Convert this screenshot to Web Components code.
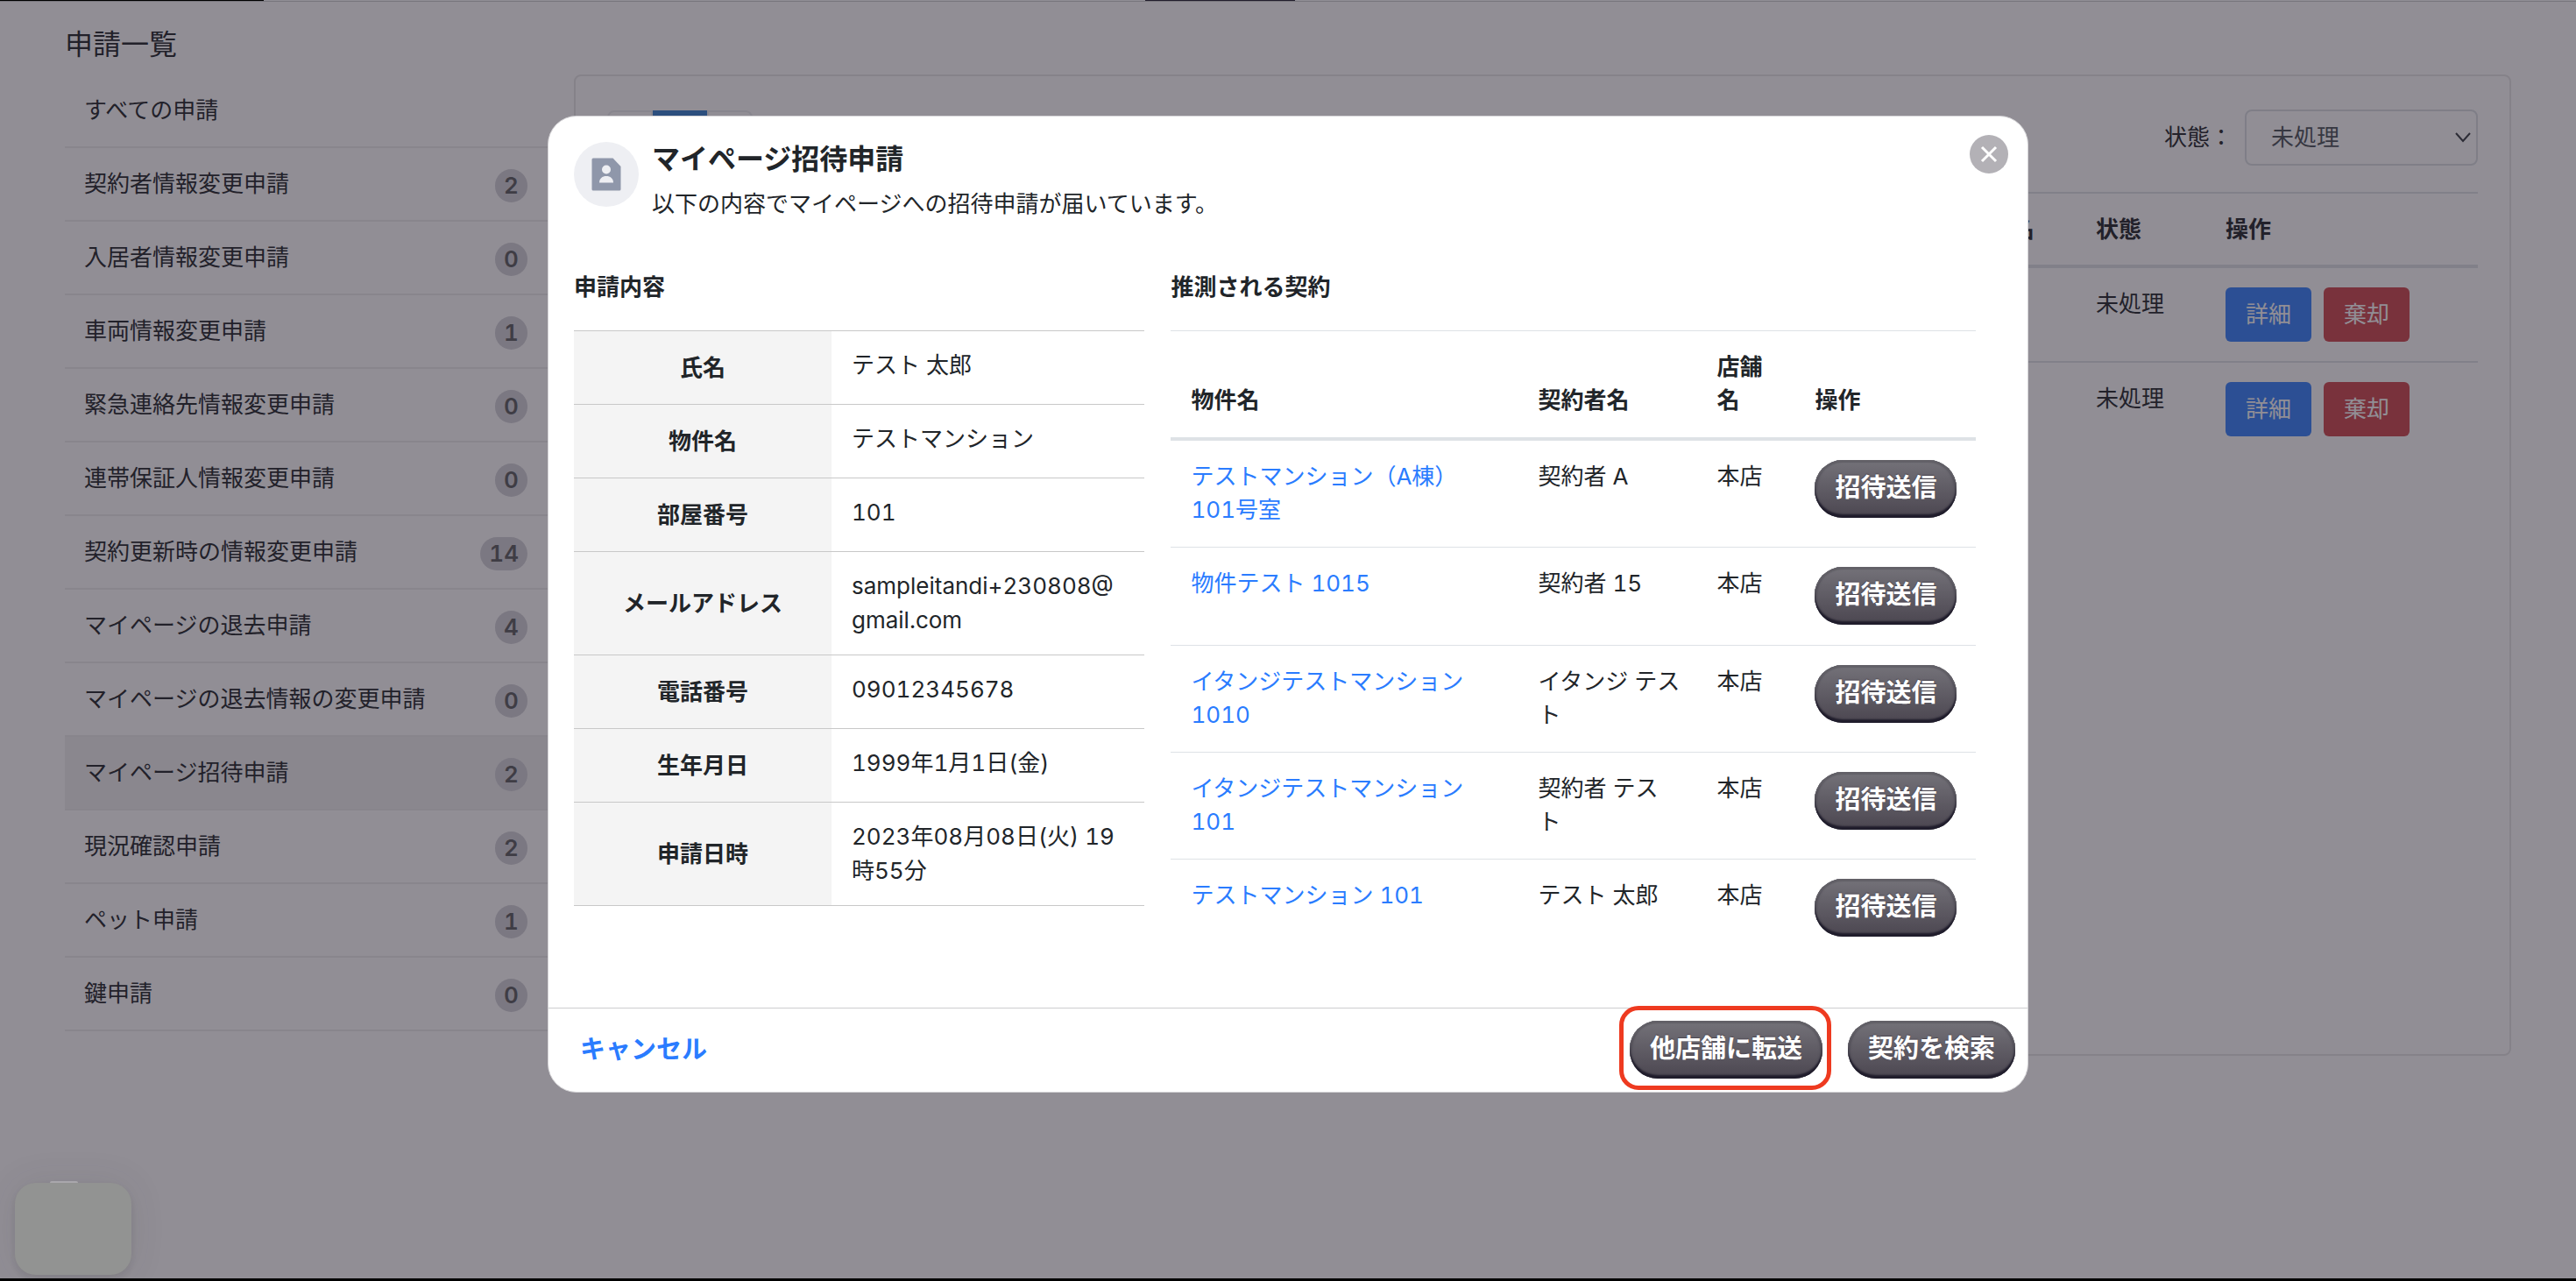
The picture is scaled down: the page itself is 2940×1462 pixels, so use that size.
<!DOCTYPE html>
<html lang="ja">
<head>
<meta charset="utf-8">
<title>申請一覧</title>
<style>
  body {
    margin: 0;
    min-height: 100vh;
    overflow: hidden;
    background: #fff;
    color: #212529;
    font: 26px/38px Inter, "Noto Sans CJK JP", sans-serif;
    font-variant-numeric: tabular-nums;
    --link: #2a7cff;
    --line: #dee2e6;
  }
</style>
</head>
<body>
<request-page></request-page>
<modal-overlay>
  <invite-modal heading="マイページ招待申請" note="以下の内容でマイページへの招待申請が届いています。">
    <detail-table slot="detail"></detail-table>
    <contract-table slot="contracts"></contract-table>
    <text-button slot="cancel">キャンセル</text-button>
    <pill-button slot="actions" highlight>他店舗に転送</pill-button>
    <pill-button slot="actions">契約を検索</pill-button>
  </invite-modal>
</modal-overlay>
<chat-launcher></chat-launcher>
<window-edge></window-edge>

<script>
/**
 * base for all elements below: clone "static markup" into an open shadow root.
 */
class BaseElement extends HTMLElement {
   constructor() {
      super();
      const template = document.createElement("template");
      template.innerHTML = this.constructor.markup;
      this.attachShadow({ mode: "open" });
      this.shadowRoot.appendChild(template.content.cloneNode(true));
   }
}


/**
 * pill-button
 *    dark glossy button, "highlight" adds the red frame around it.
 */
class PillButton extends BaseElement {
   static get markup() {
      return `
<style>
  :host { display: inline-block; position: relative; vertical-align: top; }
  button {
    display: block;
    height: 66px;
    padding: 0 23px 2px;
    border: 0;
    border-radius: 32px;
    background: linear-gradient(#747279, #4b4650);
    box-shadow: inset 0 3px 1px #626067, inset 0 -4px 2px #201d2c, inset 3px 0 2px #55525b, inset -3px 0 2px #55525b;
    color: #fff;
    font: bold 29px/44px Inter, "Noto Sans CJK JP", sans-serif;
    text-shadow: 0 -1px 1px #4b4650;
    white-space: nowrap;
  }
  :host([highlight])::after {
    content: "";
    position: absolute;
    inset: -17px -10px -13px -12px;
    border: 5px solid #ee3a20;
    border-radius: 22px;
    pointer-events: none;
  }
</style>
<button type="button"><slot></slot></button>`;
   }
}
customElements.define("pill-button", PillButton);


class TextButton extends BaseElement {
   static get markup() {
      return `
<style>
  :host { display: inline-block; }
  button {
    padding: 0;
    border: 0;
    background: none;
    color: var(--link);
    font: bold 29px/44px Inter, "Noto Sans CJK JP", sans-serif;
  }
</style>
<button type="button"><slot></slot></button>`;
   }
}
customElements.define("text-button", TextButton);


/**
 * side-item
 *    one row of the request list. attributes: count, active
 */
class SideItem extends BaseElement {
   static get markup() {
      return `
<style>
  :host { display: block; }
  a {
    display: flex;
    align-items: center;
    justify-content: space-between;
    box-sizing: border-box;
    height: 84px;
    padding: 0 24px 0 22px;
    border-bottom: 2px solid #ededed;
    color: inherit;
    text-decoration: none;
  }
  :host([active]) a { background: #f1f1f1; }
  b {
    box-sizing: border-box;
    min-width: 37px;
    margin-top: 4px;
    padding: 0 10px;
    border-radius: 19px;
    background: #d3d3d9;
    color: #5b5d5f;
    font-weight: 600;
    text-align: center;
  }
</style>
<a href="#"><slot></slot></a>`;
   }

   connectedCallback() {
      const count = this.getAttribute('count');
      if (count !== null) {
         const badge = document.createElement('b');
         badge.textContent = count;
         this.shadowRoot.querySelector('a').appendChild(badge);
      }
   }
}
customElements.define("side-item", SideItem);


/**
 * status-select
 */
class StatusSelect extends BaseElement {
   static get markup() {
      return `
<style>
  :host { display: flex; align-items: center; gap: 14px; }
  span { display: grid; width: 266px; }
  select, svg { grid-area: 1 / 1; }
  select {
    appearance: none;
    height: 64px;
    padding: 0 28px;
    border: 2px solid #dadfe2;
    border-radius: 8px;
    background: #fff;
    color: #495057;
    font: inherit;
  }
  svg { justify-self: end; align-self: center; margin-right: 7px; pointer-events: none; }
</style>
<label for="status">状態：</label>
<span>
  <select id="status"><option>未処理</option></select>
  <svg width="20" height="12" viewBox="0 0 20 12" fill="none" stroke="#343a40" stroke-width="2"><path d="M2 1l8 9 8-9"/></svg>
</span>`;
   }
}
customElements.define("status-select", StatusSelect);


/**
 * request-table
 *    the list behind the modal
 */
class RequestTable extends BaseElement {
   static get markup() {
      const row = `
  <tr>
    <td></td><td></td><td>未処理</td>
    <td><div><button type="button" class="detail">詳細</button><button type="button" class="reject">棄却</button></div></td>
  </tr>`;
      return `
<style>
  :host { display: block; }
  table { width: 100%; table-layout: fixed; border-collapse: collapse; }
  th, td { padding: 22px 23px; border-top: 2px solid var(--line); text-align: left; vertical-align: top; }
  th { padding-bottom: 21px; border-bottom: 4px solid var(--line); }
  .store { width: 102px; }
  .status { width: 102px; }
  .action { width: 265px; }
  div { display: flex; gap: 14px; }
  button {
    width: 98px;
    height: 62px;
    padding: 0;
    border: 0;
    border-radius: 6px;
    color: #fff;
    font: inherit;
  }
  .detail { background: #3581fd; }
  .reject { background: #cf474d; }
</style>
<table>
  <thead><tr><th></th><th class="store">店舗名</th><th class="status">状態</th><th class="action">操作</th></tr></thead>
  <tbody>${row}${row}</tbody>
</table>`;
   }
}
customElements.define("request-table", RequestTable);


/**
 * request-page
 *    title, side list and the card with the request table
 */
class RequestPage extends BaseElement {
   static get markup() {
      return `
<style>
  :host { display: block; padding: 27px 74px 0; }
  h1 { margin: 0 0 10px; font-size: 32px; line-height: 48px; font-weight: 400; }
  .columns { display: grid; grid-template-columns: 552px 1fr; gap: 29px; align-items: start; }
  main {
    box-sizing: border-box;
    min-height: calc(100vh - 342px);
    padding: 38px 36px;
    border: 2px solid #e6e6e6;
    border-radius: 8px;
  }
  .toolbar { display: flex; justify-content: space-between; margin-bottom: 30px; }
  .pager { display: flex; margin-top: 1px; }
  .pager button { width: 52px; height: 62px; padding: 0; border: 2px solid #eceef0; background: #fff; }
  .pager button:first-child { border-radius: 8px 0 0 8px; }
  .pager button:last-child { border-radius: 0 8px 8px 0; }
  .pager .current { width: 62px; border-color: #3581d0; background: #3581d0; }
</style>
<h1>申請一覧</h1>
<div class="columns">
  <nav>
    <side-item>すべての申請</side-item>
    <side-item count="2">契約者情報変更申請</side-item>
    <side-item count="0">入居者情報変更申請</side-item>
    <side-item count="1">車両情報変更申請</side-item>
    <side-item count="0">緊急連絡先情報変更申請</side-item>
    <side-item count="0">連帯保証人情報変更申請</side-item>
    <side-item count="14">契約更新時の情報変更申請</side-item>
    <side-item count="4">マイページの退去申請</side-item>
    <side-item count="0">マイページの退去情報の変更申請</side-item>
    <side-item count="2" active>マイページ招待申請</side-item>
    <side-item count="2">現況確認申請</side-item>
    <side-item count="1">ペット申請</side-item>
    <side-item count="0">鍵申請</side-item>
  </nav>
  <main>
    <div class="toolbar">
      <div class="pager">
        <button type="button" aria-label="前へ"></button><button type="button" class="current" aria-label="1"></button><button type="button" aria-label="次へ"></button>
      </div>
      <status-select></status-select>
    </div>
    <request-table></request-table>
  </main>
</div>`;
   }
}
customElements.define("request-page", RequestPage);


const details = [
   ['氏名', 'テスト 太郎'],
   ['物件名', 'テストマンション'],
   ['部屋番号', '101'],
   ['メールアドレス', 'sampleitandi+230808@<wbr>gmail.com'],
   ['電話番号', '09012345678'],
   ['生年月日', '1999年1月1日(金)'],
   ['申請日時', '2023年08月08日(火) 19時55分'],
];

class DetailTable extends BaseElement {
   static get markup() {
      return `
<style>
  :host { display: block; }
  table { width: 100%; table-layout: fixed; border-collapse: collapse; line-height: 39px; }
  tr { height: 84px; }
  th, td { border: solid #c8c8c8; border-width: 1px 0; }
  th { width: 294px; padding: 0; background: #f4f4f4; }
  td { padding: 19px 23px 20px; vertical-align: top; }
</style>
<table>${details.map(([name, value]) => `<tr><th scope="row">${name}</th><td>${value}</td></tr>`).join('')}</table>`;
   }
}
customElements.define("detail-table", DetailTable);


const contracts = [
   ['テストマンション（A棟） 101号室', '契約者 A'],
   ['物件テスト 1015', '契約者 15'],
   ['イタンジテストマンション 1010', 'イタンジ テス<br>ト'],
   ['イタンジテストマンション 101', '契約者 テス<br>ト'],
   ['テストマンション 101', 'テスト 太郎'],
];

class ContractTable extends BaseElement {
   static get markup() {
      return `
<style>
  :host { display: block; }
  table { width: 100%; table-layout: fixed; border-collapse: collapse; }
  th, td { padding: 22px 16px 23px 23px; border-top: 1px solid var(--line); text-align: left; }
  th { border-bottom: 4px solid var(--line); vertical-align: bottom; }
  td { vertical-align: top; }
  .name { width: 357px; }
  .person { width: 165px; }
  .store { width: 73px; }
  a { color: var(--link); text-decoration: none; }
</style>
<table>
  <thead><tr><th class="name">物件名</th><th class="person">契約者名</th><th class="store">店舗名</th><th>操作</th></tr></thead>
  <tbody>${contracts.map(([name, person]) => `
    <tr><td><a href="#">${name}</a></td><td>${person}</td><td>本店</td><td><pill-button>招待送信</pill-button></td></tr>`).join('')}
  </tbody>
</table>`;
   }
}
customElements.define("contract-table", ContractTable);


/**
 * invite-modal
 *    slots: detail, contracts, cancel, actions
 */
class InviteModal extends BaseElement {
   static get markup() {
      return `
<style>
  :host {
    display: block;
    box-sizing: border-box;
    width: 100%;
    max-width: 1690px;
    border: 1px solid #d4d3d6;
    border-radius: 33px;
    background: #fff;
  }
  header { display: flex; align-items: flex-start; gap: 15px; padding: 25px 22px 0 29px; }
  .icon { flex: none; margin-top: 4px; }
  .titles { flex: 1; }
  h2 { margin: 0 0 8px; font-size: 32px; line-height: 48px; }
  p { margin: 0; }
  .close {
    display: grid;
    place-items: center;
    width: 44px;
    height: 44px;
    margin-top: -4px;
    padding: 0;
    border: 0;
    border-radius: 50%;
    background: #b3b1b6;
  }
  .body { display: grid; grid-template-columns: 651fr 918fr; gap: 30px; padding: 57px 59px 58px 29px; align-items: start; }
  h3 { margin: 0 0 30px; font-size: 26px; line-height: 38px; }
  footer {
    display: flex;
    justify-content: space-between;
    align-items: center;
    padding: 14px 14px 15px 36px;
    border-top: 1px solid #cdcdcf;
  }
  .actions { display: flex; gap: 29px; }
</style>
<header>
  <svg class="icon" width="74" height="74" viewBox="0 0 74 74">
    <circle cx="37" cy="37" r="37" fill="#eeeff3"/>
    <path d="M22 18.500h22.500l9 9.500v26a1.500 1.500 0 0 1-1.500 1.500h-30a1.500 1.500 0 0 1-1.500-1.500v-34a1.500 1.500 0 0 1 1.500-1.500z" fill="#8f97aa"/>
    <circle cx="37" cy="31.500" r="5" fill="#eeeff3"/>
    <path d="M29 46.500c0-5 3.500-7.500 8-7.500s8 2.500 8 7.500z" fill="#eeeff3"/>
  </svg>
  <div class="titles"><h2></h2><p></p></div>
  <button type="button" class="close" aria-label="閉じる">
    <svg width="20" height="20" viewBox="0 0 20 20" stroke="#fff" stroke-width="3"><path d="M2 2l16 16M18 2L2 18"/></svg>
  </button>
</header>
<div class="body">
  <section><h3>申請内容</h3><slot name="detail"></slot></section>
  <section><h3>推測される契約</h3><slot name="contracts"></slot></section>
</div>
<footer>
  <slot name="cancel"></slot>
  <div class="actions"><slot name="actions"></slot></div>
</footer>`;
   }

   connectedCallback() {
      this.shadowRoot.querySelector('h2').textContent = this.getAttribute('heading');
      this.shadowRoot.querySelector('p').textContent = this.getAttribute('note');
   }
}
customElements.define("invite-modal", InviteModal);


class ModalOverlay extends BaseElement {
   static get markup() {
      return `
<style>
  :host {
    position: fixed;
    inset: 0;
    display: flex;
    justify-content: center;
    align-items: flex-start;
    padding-top: 132px;
    background: rgba(35, 29, 43, .5);
  }
</style>
<slot></slot>`;
   }
}
customElements.define("modal-overlay", ModalOverlay);


/**
 * chat-launcher
 *    blank tile in the bottom left corner
 */
class ChatLauncher extends BaseElement {
   static get markup() {
      return `
<style>
  :host {
    position: fixed;
    left: 17px;
    bottom: 7px;
    width: 133px;
    height: 105px;
    border-radius: 24px;
    background: #929392;
    box-shadow: 0 0 40px rgba(60, 55, 70, .1), 0 4px 8px rgba(60, 60, 60, .12);
  }
  i { position: absolute; left: 40px; top: -2px; width: 32px; height: 2px; border-radius: 16px 16px 0 0; background: #a9a7ac; }
</style>
<i></i>`;
   }
}
customElements.define("chat-launcher", ChatLauncher);


/**
 * window-edge
 *    thin dark strips on the top and bottom of the window
 */
class WindowEdge extends BaseElement {
   static get markup() {
      return `
<style>
  :host {
    position: fixed;
    inset: 0;
    box-sizing: border-box;
    border-bottom: 3px solid #000;
    pointer-events: none;
  }
  div { display: flex; justify-content: space-between; height: 1px; border-bottom: 1px solid #77757c; }
  i { width: 301px; background: #000; }
  i + i { width: 171px; background: #221d2c; }
  i + i + i { visibility: hidden; width: 456px; }
</style>
<div><i></i><i></i><i></i></div>`;
   }
}
customElements.define("window-edge", WindowEdge);
</script>
</body>
</html>
